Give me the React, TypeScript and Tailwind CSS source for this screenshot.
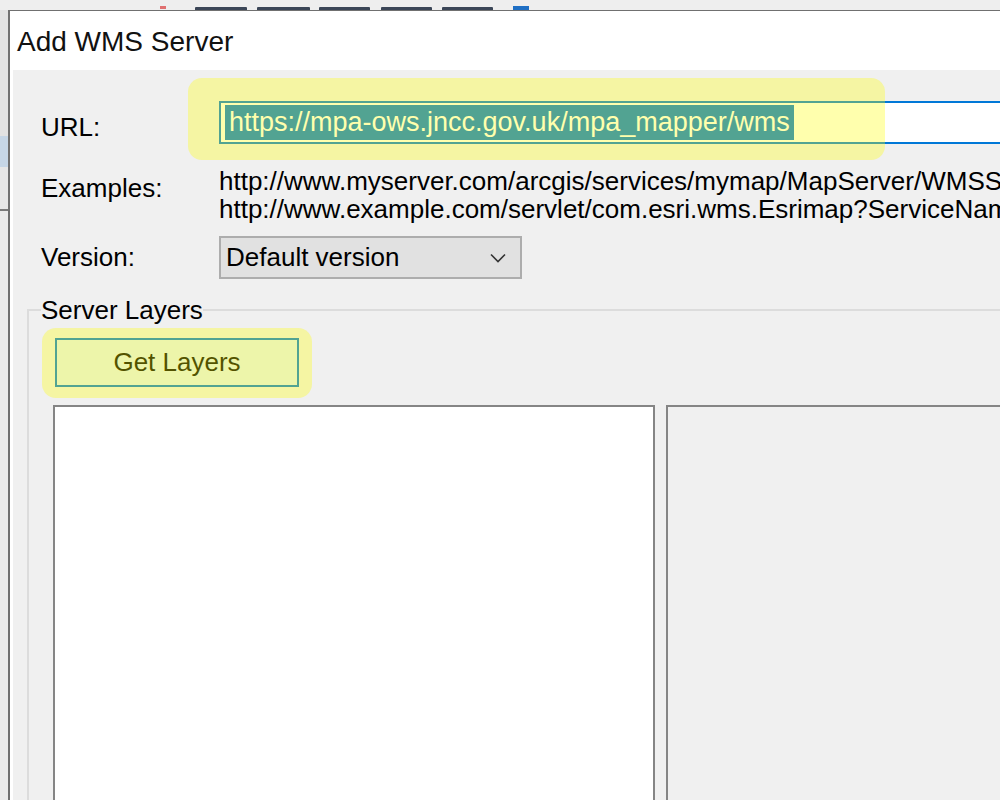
import React from "react";

const toolbarStubs = [
  { ml: "ml-[29px]", w: "w-[52px]" },
  { ml: "ml-[10px]", w: "w-[53px]" },
  { ml: "ml-[9px]", w: "w-[51px]" },
  { ml: "ml-[11px]", w: "w-[51px]" },
  { ml: "ml-[10px]", w: "w-[51px]" },
];

const App = () => {
  return (
    <div className="relative h-[800px] w-[1000px] overflow-hidden bg-[#ececec] font-['Liberation_Sans',Arial,sans-serif] text-black">
      {/* TOOLBAR REMNANTS BEHIND THE DIALOG */}
      <div className="flex h-[10px] items-end bg-[#eeeeee]">
        <div className="ml-[160px] mb-[1px] h-[3px] w-[6px] bg-[#e07070]" />
        {toolbarStubs.map((s, i) => (
          <div
            key={i}
            className={`${s.ml} ${s.w} h-[3px] rounded-t-[1px] bg-[#3b4657]`}
          />
        ))}
        <div className="ml-[20px] h-[4px] w-[16px] bg-[#1f6fc4]" />
      </div>

      <div className="flex h-[840px]">
        {/* WINDOW BEHIND, LEFT EDGE */}
        <div className="flex w-[8px] shrink-0 flex-col bg-[#ebebeb]">
          <div className="h-[126px] bg-[#e2e2e2]" />
          <div className="h-[31px] bg-[#c6d6e6]" />
          <div className="h-[42px] bg-[#e6e6e6]" />
          <div className="h-[2px] bg-[#7a7a7a]" />
        </div>

        {/* DIALOG */}
        <div className="flex w-[1080px] shrink-0 flex-col border-l-[2px] border-t border-[#707070]">
          {/* TITLE */}
          <div className="h-[59px] bg-white pl-[7px] pt-[3px] text-[28px] leading-[56px] text-[#111]">
            Add WMS Server
          </div>

          {/* BODY */}
          <div className="flex flex-1 flex-col border-l-[3px] border-white bg-[#f0f0f0] px-[14px] text-[26px]">
            {/* URL */}
            <div className="mt-[31px] flex h-[43px] items-center pl-[14px]">
              <div className="w-[178px] shrink-0 pt-[10px]">URL:</div>
              <div className="flex h-[43px] flex-1 items-center border-2 border-[#0078d7] bg-white pl-[4px]">
                <span className="whitespace-nowrap bg-[#0078d7] px-[4px] text-[27px] leading-[35px] text-white">
                  https://mpa-ows.jncc.gov.uk/mpa_mapper/wms
                </span>
              </div>
            </div>

            {/* EXAMPLES */}
            <div className="mt-[23px] flex pl-[14px] leading-[28px]">
              <div className="mt-[7px] w-[178px] shrink-0">Examples:</div>
              <div className="whitespace-nowrap">
                <div>http://www.myserver.com/arcgis/services/mymap/MapServer/WMSServer</div>
                <div>http://www.example.com/servlet/com.esri.wms.Esrimap?ServiceName=Test</div>
              </div>
            </div>

            {/* VERSION */}
            <div className="mt-[13px] flex h-[43px] items-center pl-[14px]">
              <div className="w-[178px] shrink-0">Version:</div>
              <div className="flex h-[43px] w-[303px] items-center justify-between border-2 border-[#adadad] bg-[#e1e1e1] pl-[5px] pr-[14px]">
                <span>Default version</span>
                <svg width="16" height="10" viewBox="0 0 16 10" fill="none">
                  <polyline points="1,1.5 8,8.5 15,1.5" stroke="#333" strokeWidth="1.6" />
                </svg>
              </div>
            </div>

            {/* SERVER LAYERS GROUP */}
            <fieldset className="mt-[17px] flex flex-1 flex-col border-2 border-[#dcdcdc]">
              <legend className="ml-[12px] leading-[28px]">Server Layers</legend>
              <button className="ml-[26px] mt-[14px] h-[49px] w-[244px] border-2 border-[#0078d7] bg-[#e5f1fb] text-[26px] text-black">
                Get Layers
              </button>
              <div className="ml-[24px] mt-[18px] flex flex-1 gap-[11px]">
                <div className="w-[602px] border-2 border-[#858585] bg-white" />
                <div className="flex-1 border-2 border-[#858585] bg-[#f0f0f0]" />
              </div>
            </fieldset>
          </div>
        </div>
      </div>

      {/* HIGHLIGHT OVERLAYS */}
      <div className="absolute left-[188px] top-[78px] h-[82px] w-[697px] rounded-[14px] bg-[rgba(255,255,0,0.32)]" />
      <div className="absolute left-[42px] top-[328px] h-[70px] w-[270px] rounded-[14px] bg-[rgba(255,255,0,0.32)]" />
    </div>
  );
};

export default App;
